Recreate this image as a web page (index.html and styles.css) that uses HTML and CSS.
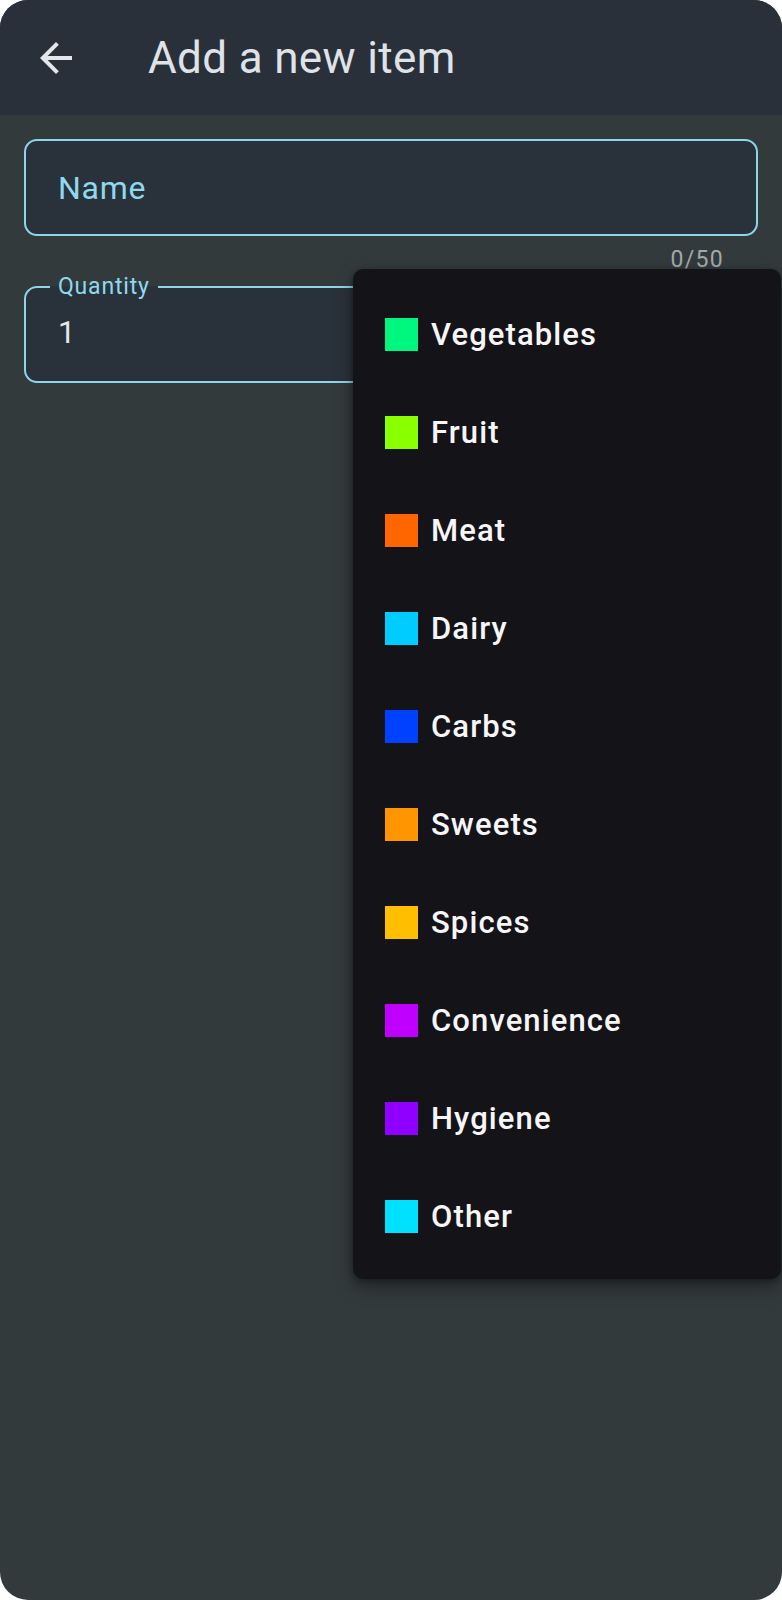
FILE: index.html
```html
<!DOCTYPE html>
<html>
<head>
<meta charset="utf-8">
<link rel="stylesheet" href="styles.css">
</head>
<body>
<div class="screen">
  <header class="appbar">
    <svg class="back" viewBox="0 0 24 24" width="48" height="48"><path d="M20 11H7.83l5.59-5.59L12 4l-8 8 8 8 1.41-1.41L7.83 13H20v-2z" fill="#e4e7ea"/></svg>
    <h1 class="title">Add a new item</h1>
  </header>
  <main class="content">
    <div class="field name-field"><span class="placeholder">Name</span></div>
    <div class="counter">0/50</div>
    <fieldset class="field qty-field">
      <legend class="qty-label">Quantity</legend>
      <span class="value">1</span>
    </fieldset>
  </main>
  <ul class="menu">
    <li class="item"><span class="swatch sw-veg"></span>Vegetables</li>
    <li class="item"><span class="swatch sw-fruit"></span>Fruit</li>
    <li class="item"><span class="swatch sw-meat"></span>Meat</li>
    <li class="item"><span class="swatch sw-dairy"></span>Dairy</li>
    <li class="item"><span class="swatch sw-carbs"></span>Carbs</li>
    <li class="item"><span class="swatch sw-sweets"></span>Sweets</li>
    <li class="item"><span class="swatch sw-spices"></span>Spices</li>
    <li class="item"><span class="swatch sw-conv"></span>Convenience</li>
    <li class="item"><span class="swatch sw-hyg"></span>Hygiene</li>
    <li class="item"><span class="swatch sw-other"></span>Other</li>
  </ul>
</div>
</body>
</html>
```

FILE: styles.css
```css
* { box-sizing: border-box; }
html, body { margin: 0; padding: 0; background: #ffffff; }
body { font-family: Roboto, "Noto Sans", sans-serif; }

.screen {
  position: relative;
  width: 782px;
  height: 1600px;
  border-radius: 28px;
  overflow: hidden;
  background: #323a3b;
}

.appbar {
  height: 115px;
  background: #29303a;
  display: flex;
  align-items: center;
}
.back {
  display: block;
  margin-left: 32px;
}
.title {
  margin: 0 0 0 68px;
  font-weight: 400;
  font-size: 44px;
  color: #dfe3e8;
  letter-spacing: 0.35px;
}

.content {
  padding: 24px 24px 0 24px;
}

.field {
  width: 734px;
  border: 2px solid #8ed4ea;
  border-radius: 13px;
  background: #29313a;
}
.name-field {
  height: 97px;
  display: flex;
  align-items: center;
  padding-left: 32px;
}
.placeholder {
  font-size: 32px;
  color: #8fd9ef;
  letter-spacing: 0.7px;
}

.counter {
  text-align: right;
  padding-right: 34px;
  margin-top: 11px;
  font-size: 23px;
  line-height: 26px;
  color: #a3a8aa;
  letter-spacing: 1.3px;
}

.qty-field {
  margin: 2px 0 0 0;
  height: 108px;
  padding: 0 0 0 32px;
  min-width: 0;
}
.qty-label {
  margin-left: -8px;
  padding: 0 8px;
  font-size: 23px;
  line-height: 24px;
  color: #8fd9ef;
  letter-spacing: 0.8px;
}
.value {
  display: block;
  margin-top: 14px;
  font-size: 31px;
  line-height: 40px;
  color: #e6e8ea;
}

.menu {
  position: absolute;
  left: 353px;
  top: 269px;
  width: 428px;
  margin: 0;
  padding: 16px 0 14px 0;
  list-style: none;
  background: #141318;
  border-radius: 10px;
  box-shadow: 0 8px 18px rgba(0, 0, 0, 0.35), 0 2px 6px rgba(0, 0, 0, 0.3);
}
.item {
  height: 98px;
  display: flex;
  align-items: center;
  padding-left: 32px;
  gap: 13px;
  font-size: 31px;
  font-weight: 500;
  letter-spacing: 1.1px;
  color: #f6f6f8;
}
.swatch {
  width: 33px;
  height: 33px;
  flex: none;
}
.sw-veg { background: #00f77f; }
.sw-fruit { background: #8aff00; }
.sw-meat { background: #ff6600; }
.sw-dairy { background: #00ccff; }
.sw-carbs { background: #0040ff; }
.sw-sweets { background: #ff9500; }
.sw-spices { background: #ffbf00; }
.sw-conv { background: #bf00ff; }
.sw-hyg { background: #9000ff; }
.sw-other { background: #00e1ff; }
```
